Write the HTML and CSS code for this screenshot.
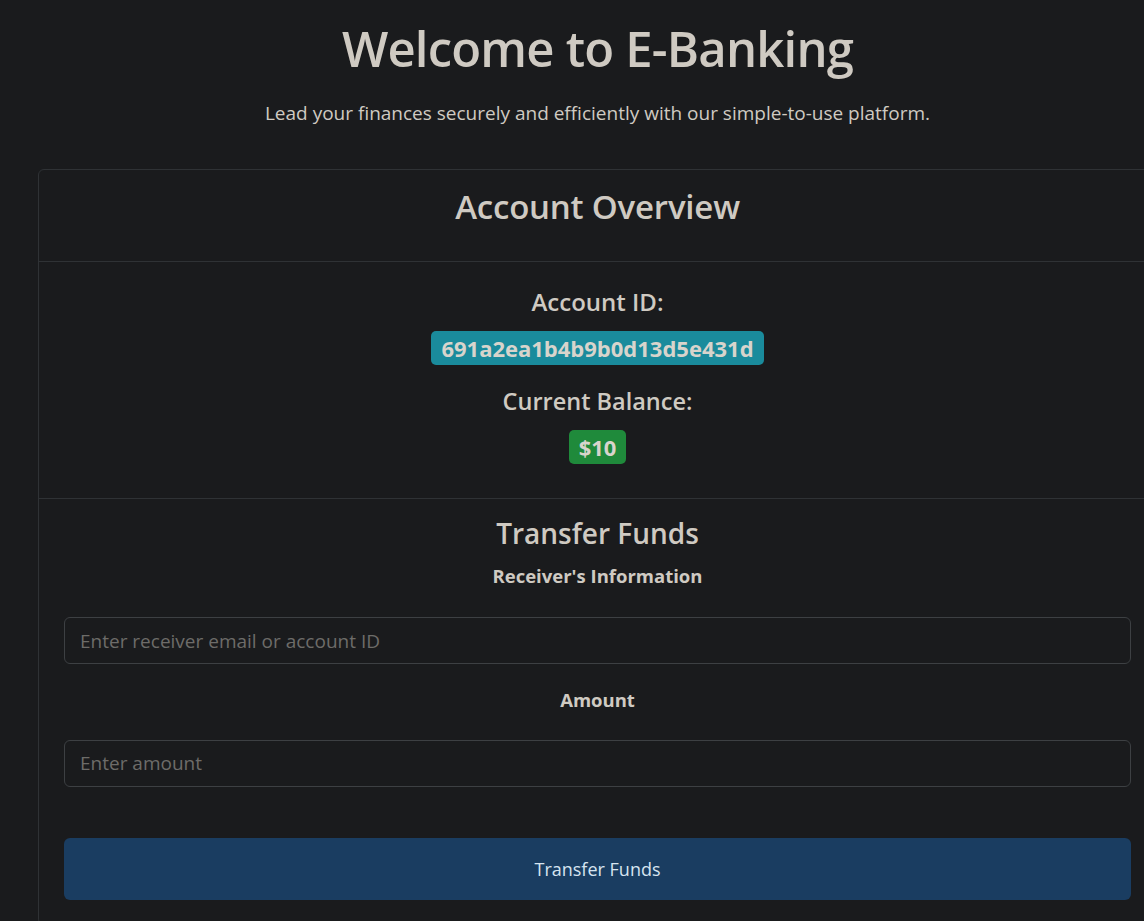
FILE: index.html
```html
<!DOCTYPE html>
<html lang="en">
<head>
<meta charset="utf-8">
<title>E-Banking</title>
<link rel="stylesheet" href="styles.css">
</head>
<body>
<div class="page">
  <header class="hero">
    <h1 class="hero-title">Welcome to E-Banking</h1>
    <p class="lead">Lead your finances securely and efficiently with our simple-to-use platform.</p>
  </header>

  <section class="card">
    <div class="card-header">
      <h2 class="card-title">Account Overview</h2>
    </div>

    <div class="card-section overview">
      <h4 class="field-title">Account ID:</h4>
      <span class="badge badge-info">691a2ea1b4b9b0d13d5e431d</span>
      <h4 class="field-title">Current Balance:</h4>
      <span class="badge badge-success">$10</span>
    </div>

    <div class="card-section transfer">
      <h3 class="section-title">Transfer Funds</h3>
      <form class="transfer-form">
        <label class="form-label" for="receiver">Receiver's Information</label>
        <input class="form-control" id="receiver" type="text" placeholder="Enter receiver email or account ID">
        <label class="form-label" for="amount">Amount</label>
        <input class="form-control" id="amount" type="text" placeholder="Enter amount">
        <button class="btn-primary" type="button">Transfer Funds</button>
      </form>
    </div>
  </section>
</div>
</body>
</html>
```

FILE: styles.css
```css
html {
  overflow: hidden;
}

body {
  margin: 0;
  background: #1a1b1d;
  color: #cfcac2;
  font-family: "Open Sans", "Noto Sans", "Liberation Sans", sans-serif;
}

/* the layout is 1195px wide with a centred 1140px container */
.page {
  width: 1119px;
  padding: 0 12px;
  margin-left: 26px;
}

.hero {
  text-align: center;
  padding-top: 19px;
}

.hero-title {
  margin: 0;
  font-size: 49px;
  font-weight: 600;
  line-height: 1.2;
  letter-spacing: -0.8px;
  color: #cfcac2;
}

.lead {
  margin: 21px 0 0;
  font-size: 19px;
  font-weight: 400;
  line-height: 1.5;
}

.card {
  margin-top: 42px;
  border: 1px solid #2f3235;
  border-radius: 6px;
  background: #1a1b1d;
}

.card-header {
  border-bottom: 1px solid #2f3235;
  text-align: center;
  padding: 17px 0 34px;
}

.card-title {
  margin: 0;
  font-size: 33px;
  font-weight: 600;
  line-height: 1.2;
  letter-spacing: -0.2px;
}

.card-section {
  text-align: center;
  padding: 0 25px;
}

.overview {
  display: flex;
  flex-direction: column;
  align-items: center;
  padding-top: 26px;
  padding-bottom: 34px;
  border-bottom: 1px solid #2f3235;
}

.field-title {
  margin: 0 0 14px;
  font-size: 24px;
  font-weight: 600;
  line-height: 1.2;
}

.badge {
  display: inline-block;
  padding: 4px 10px;
  border-radius: 5px;
  font-size: 22px;
  font-weight: 700;
  line-height: 26px;
  color: #d8d4cc;
}

.badge + .field-title {
  margin-top: 22px;
  margin-bottom: 15px;
  font-size: 23.5px;
}

.badge-info {
  background: #1a8b9c;
}

.badge-success {
  background: #1f8a3b;
}

.transfer {
  padding-top: 18px;
  padding-bottom: 24px;
}

.section-title {
  margin: 0;
  font-size: 28px;
  font-weight: 600;
  line-height: 1.2;
}

.transfer-form {
  display: flex;
  flex-direction: column;
}

.form-label {
  display: block;
  margin: 12px 0 0;
  font-size: 18.5px;
  font-weight: 700;
  line-height: 1.5;
}

.form-control {
  box-sizing: border-box;
  margin-top: 27px;
  width: 100%;
  height: 47px;
  padding: 0 15px;
  border: 1px solid #3d4043;
  border-radius: 6px;
  background: #1a1b1d;
  color: #cfcac2;
  font-family: inherit;
  font-size: 19px;
}

.form-control::placeholder {
  color: #6d6c69;
}

.form-control + .form-label {
  margin-top: 22px;
}

.form-control + .form-label + .form-control {
  margin-top: 26px;
}

.btn-primary {
  margin-top: 51px;
  height: 62px;
  border: none;
  border-radius: 6px;
  background: #1a3d61;
  color: #d6e4f0;
  font-family: inherit;
  font-size: 18px;
}
```
